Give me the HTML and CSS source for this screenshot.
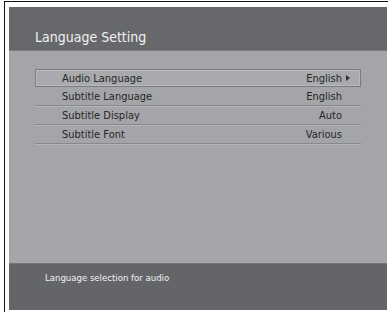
FILE: index.html
```html
<!DOCTYPE html>
<html>
<head>
<meta charset="utf-8">
<link rel="stylesheet" href="styles.css">
</head>
<body>
<div class="frame">
  <div class="panel">
    <div class="header"><h1 class="title">Language Setting</h1></div>
    <div class="content">
      <ul class="menu">
        <li class="row selected"><span class="label">Audio Language</span><span class="val">English<span class="arrow"></span></span></li>
        <li class="row"><span class="label">Subtitle Language</span><span class="val">English</span></li>
        <li class="row"><span class="label">Subtitle Display</span><span class="val">Auto</span></li>
        <li class="row"><span class="label">Subtitle Font</span><span class="val">Various</span></li>
      </ul>
    </div>
    <div class="footer">Language selection for audio</div>
  </div>
</div>
</body>
</html>
```
FILE: styles.css
```css
html, body {
  margin: 0;
  padding: 0;
  background: #fff;
}
body {
  font-family: "DejaVu Sans Condensed", "Liberation Sans", sans-serif;
}
.frame {
  margin: 1px 0 0 4px;
  width: 379px;
  height: 305px;
  border-left: 1px solid #151515;
  border-top: 1px solid #151515;
  padding: 5px 0 0 4px;
}
.panel {
  width: 378px;
  height: 303px;
  display: flex;
  flex-direction: column;
  background: #a4a5a8;
}
.header {
  height: 44px;
  background: #67686b;
  border-bottom: 1px solid #7d7e81;
  box-sizing: border-box;
  display: flex;
  align-items: flex-end;
}
.title {
  margin: 0 0 5px 26px;
  font-weight: normal;
  font-size: 14px;
  line-height: 16px;
  color: #f0f0f0;
}
.content {
  flex: 1;
  padding-top: 18px;
}
.menu {
  list-style: none;
  margin: 0 0 0 26px;
  padding: 0;
  width: 326px;
}
.row {
  position: relative;
  height: 19px;
  box-sizing: border-box;
  display: flex;
  align-items: center;
  justify-content: space-between;
  padding: 0 19px 0 27px;
  font-size: 11px;
  color: #262626;
  border-bottom: 1px solid #88898c;
  box-shadow: 0 1px 0 #b4b5b8;
}
.row.selected {
  height: 18px;
  border: 1px solid #7b7c7f;
  box-shadow: inset 1px 1px 0 #b9babd, inset -1px -1px 0 #b9babd;
  background: #a9aaad;
  padding: 0 18px 0 26px;
}
.val {
  position: relative;
}
.arrow {
  position: absolute;
  right: -8px;
  top: 50%;
  margin-top: -3px;
  width: 0;
  height: 0;
  border-left: 4px solid #333;
  border-top: 3px solid transparent;
  border-bottom: 3px solid transparent;
}
.footer {
  height: 47px;
  box-sizing: border-box;
  background: #646568;
  border-top: 1px solid #747578;
  padding: 8px 0 0 36px;
  font-size: 9.5px;
  line-height: 12px;
  color: #f2f2f2;
}
```
